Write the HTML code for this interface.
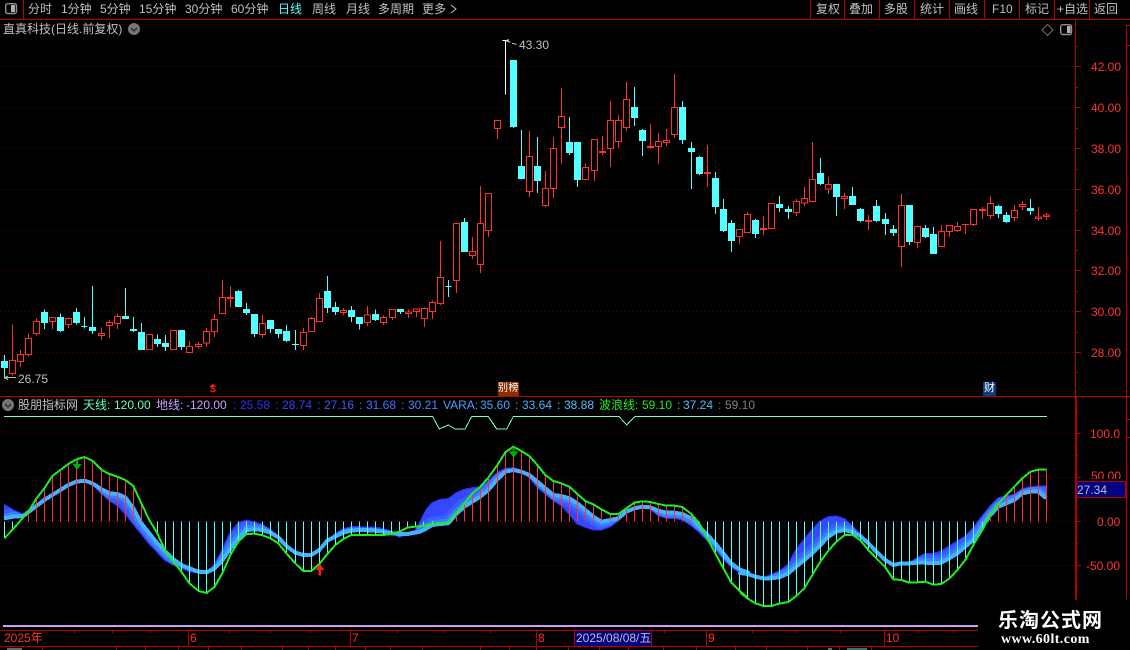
<!DOCTYPE html>
<html lang="zh"><head><meta charset="utf-8"><title>K线</title>
<style>
html,body{margin:0;padding:0;background:#000;width:1130px;height:650px;overflow:hidden}
#p{position:relative;width:1130px;height:650px;overflow:hidden;background:#000;font:12px/14px "Liberation Sans","WenQuanYi Zen Hei","Noto Sans CJK SC",sans-serif;color:#c0c0c0}
#p svg{position:absolute;left:0;top:0}
#p span{position:absolute;white-space:pre}
.r{color:#ff3232}
</style></head><body><div id="p">
<svg width="1130" height="650" viewBox="0 0 1130 650" shape-rendering="crispEdges" fill="none">
<defs>
<path id="b1" d="M12 345L40 362 70 375 100 355 133 325 157 313 181 300 205 285 229 275 253 272 277 280 300 305 328 330 352 345 376 370 400 400 424 430 448 460 472 485 496 510 520 523 544 533 568 543 596 547 620 547 644 525 668 480 691 430 715 400 739 392 763 398 787 405 811 420 835 440 859 465 886 488 910 495 934 495 958 480 982 452 1006 432 1030 418 1054 412 1078 412 1140 415V422L1078 420 1054 422 1030 428 1006 440 982 452 958 480 934 495 910 495 886 488 859 468 835 442 811 428 787 420 763 418 739 420 715 445 691 475 668 510 644 535 620 547 596 545 568 535 544 525 520 508 496 485 472 460 448 430 424 400 400 355 376 322 352 312 328 310 300 295 277 280 253 272 229 275 205 285 181 300 157 315 133 330 100 355 70 378 40 380 12 385z"/>
<path id="d1" d="M12 345L40 362 70 375 100 355 133 325 157 313 181 300 205 285 229 275 253 272 277 280 300 305 328 330 352 345 376 370 400 400 424 430 448 460 472 485 496 510 520 523 544 533 568 543 596 547 620 547 644 525 668 480 691 430 715 400 739 392 763 398 787 405 811 420 835 440 859 465 886 488 910 495 934 495 958 480 982 452 1006 432 1030 418 1054 412 1078 412 1140 415"/>
<path id="l1" d="M12 385L40 380 70 378 100 355 133 330 157 315 181 300 205 285 229 275 253 272 277 280 300 295 328 310 352 312 376 322 400 355 424 400 448 430 472 460 496 485 520 508 544 525 568 535 596 545 620 547 644 535 668 510 691 475 715 445 739 420 763 418 787 420 811 428 835 442 859 468 886 488 910 495 934 495 958 480 982 452 1006 440 1030 428 1054 422 1078 420 1140 422"/>
<clipPath id="c1"><path d="M12 345L40 362 70 375 100 355 133 325 157 313 181 300 205 285 229 275 253 272 277 280 300 305 328 330 352 345 376 370 400 400 424 430 448 460 472 485 496 510 520 523 544 533 568 543 596 547 620 547 644 525 668 480 691 430 715 400 739 392 763 398 787 405 811 420 835 440 859 465 886 488 910 495 934 495 958 480 982 452 1006 432 1030 418 1054 412 1078 412 1140 415V422L1078 420 1054 422 1030 428 1006 440 982 452 958 480 934 495 910 495 886 488 859 468 835 442 811 428 787 420 763 418 739 420 715 445 691 475 668 510 644 535 620 547 596 545 568 535 544 525 520 508 496 485 472 460 448 430 424 400 400 355 376 322 352 312 328 310 300 295 277 280 253 272 229 275 205 285 181 300 157 315 133 330 100 355 70 378 40 380 12 385z"/></clipPath>
<path id="b2" d="M0 412L40 418 64 425 88 440 112 430 136 422 150 400 170 360 187 340 211 330 235 328 259 310 283 300 307 295 331 292 355 275 382 250 406 237 430 235 454 243 478 260 502 290 526 310 550 330 574 345 598 370 622 400 646 410 670 418 694 418 721 408 745 390 769 365 793 352 817 348 841 355 865 375 889 383 913 383 937 388 964 405 988 425 1012 450 1036 475 1060 505 1084 530 1108 545 1140 552V550L1108 538 1084 520 1060 490 1036 460 1012 435 988 410 964 385 937 372 913 368 889 368 865 362 841 352 817 350 793 355 769 365 745 385 721 390 694 395 670 380 646 360 622 340 598 325 574 318 550 315 526 295 502 275 478 255 454 245 430 240 406 245 382 268 355 300 331 320 307 335 283 350 259 372 235 400 211 402 187 405 170 415 150 425 136 428 112 432 88 432 64 430 40 425 0 420z"/>
<path id="d2" d="M0 412L40 418 64 425 88 440 112 430 136 422 150 400 170 360 187 340 211 330 235 328 259 310 283 300 307 295 331 292 355 275 382 250 406 237 430 235 454 243 478 260 502 290 526 310 550 330 574 345 598 370 622 400 646 410 670 418 694 418 721 408 745 390 769 365 793 352 817 348 841 355 865 375 889 383 913 383 937 388 964 405 988 425 1012 450 1036 475 1060 505 1084 530 1108 545 1140 552"/>
<path id="l2" d="M0 420L40 425 64 430 88 432 112 432 136 428 150 425 170 415 187 405 211 402 235 400 259 372 283 350 307 335 331 320 355 300 382 268 406 245 430 240 454 245 478 255 502 275 526 295 550 315 574 318 598 325 622 340 646 360 670 380 694 395 721 390 745 385 769 365 793 355 817 350 841 352 865 362 889 368 913 368 937 372 964 385 988 410 1012 435 1036 460 1060 490 1084 520 1108 538 1140 550"/>
<clipPath id="c2"><path d="M0 412L40 418 64 425 88 440 112 430 136 422 150 400 170 360 187 340 211 330 235 328 259 310 283 300 307 295 331 292 355 275 382 250 406 237 430 235 454 243 478 260 502 290 526 310 550 330 574 345 598 370 622 400 646 410 670 418 694 418 721 408 745 390 769 365 793 352 817 348 841 355 865 375 889 383 913 383 937 388 964 405 988 425 1012 450 1036 475 1060 505 1084 530 1108 545 1140 552V550L1108 538 1084 520 1060 490 1036 460 1012 435 988 410 964 385 937 372 913 368 889 368 865 362 841 352 817 350 793 355 769 365 745 385 721 390 694 395 670 380 646 360 622 340 598 325 574 318 550 315 526 295 502 275 478 255 454 245 430 240 406 245 382 268 355 300 331 320 307 335 283 350 259 372 235 400 211 402 187 405 170 415 150 425 136 428 112 432 88 432 64 430 40 425 0 420z"/></clipPath>
<path id="b3" d="M-5 545L22 550 46 558 70 565 94 555 118 545 145 525 169 480 193 450 217 420 241 395 265 382 289 380 313 388 337 410 361 435 385 460 409 485 436 510 460 525 484 520 508 520 532 505 556 492 580 492 604 485 628 470 652 455 676 440 700 415 727 380 751 350 775 325 799 320 823 315 847 298 871 292 895 290 919 290V325L895 305 871 305 847 310 823 330 799 340 775 350 751 375 727 410 700 450 676 470 652 490 628 505 604 518 580 520 556 518 532 518 508 520 484 520 460 525 436 510 409 485 385 460 361 438 337 425 313 420 289 425 265 440 241 465 217 490 193 510 169 530 145 550 118 562 94 565 70 565 46 560 22 552 -5 548z"/>
<path id="d3" d="M-5 545L22 550 46 558 70 565 94 555 118 545 145 525 169 480 193 450 217 420 241 395 265 382 289 380 313 388 337 410 361 435 385 460 409 485 436 510 460 525 484 520 508 520 532 505 556 492 580 492 604 485 628 470 652 455 676 440 700 415 727 380 751 350 775 325 799 320 823 315 847 298 871 292 895 290 919 290"/>
<path id="l3" d="M-5 548L22 552 46 560 70 565 94 565 118 562 145 550 169 530 193 510 217 490 241 465 265 440 289 425 313 420 337 425 361 438 385 460 409 485 436 510 460 525 484 520 508 520 532 518 556 518 580 520 604 518 628 505 652 490 676 470 700 450 727 410 751 375 775 350 799 340 823 330 847 310 871 305 895 305 919 325"/>
<clipPath id="c3"><path d="M-5 545L22 550 46 558 70 565 94 555 118 545 145 525 169 480 193 450 217 420 241 395 265 382 289 380 313 388 337 410 361 435 385 460 409 485 436 510 460 525 484 520 508 520 532 505 556 492 580 492 604 485 628 470 652 455 676 440 700 415 727 380 751 350 775 325 799 320 823 315 847 298 871 292 895 290 919 290V325L895 305 871 305 847 310 823 330 799 340 775 350 751 375 727 410 700 450 676 470 652 490 628 505 604 518 580 520 556 518 532 518 508 520 484 520 460 525 436 510 409 485 385 460 361 438 337 425 313 420 289 425 265 440 241 465 217 490 193 510 169 530 145 550 118 562 94 565 70 565 46 560 22 552 -5 548z"/></clipPath>
</defs>
<!-- grid -->
<path d="M0 66.5H1075M0 107.5H1075M0 148.5H1075M0 189.5H1075M0 230.5H1075M0 270.5H1075M0 311.5H1075M0 352.5H1075M0 433.5H1075M0 477.5H1075M0 521.5H1075M0 565.5H1075" stroke="#6e0000" stroke-dasharray="1 3" shape-rendering="auto"/>
<!-- frame -->
<path d="M0 19.5H1130M0 396.5H1130M23.5 0V19M810.5 0V19M844.5 0V19M879.5 0V19M914.5 0V19M949.5 0V19M984.5 0V19M1019.5 0V19M1054.5 0V19M1089.5 0V19M1075.5 19V600M1126.5 25V600M1076.5 396V600M0 630.5H978M0 646.5H978M188.5 630V646M350.5 630V646M536.5 630V646M706.5 630V646M884.5 630V646M74.5 630V633M112.5 630V633M150.5 630V633M229.5 630V633M270.5 630V633M310.5 630V633M397.5 630V633M443.5 630V633M490.5 630V633M664.5 630V633M752.5 630V633M795.5 630V633M840.5 630V633M918.5 630V633M953.5 630V633M42.5 646V650M116.5 646V650M145.5 646V650M178.5 646V650M208.5 646V650M241.5 646V650M282.5 646V650M308.5 646V650M335.5 646V650M365.5 646V650M390.5 646V650M422.5 646V650M480.5 646V650M509.5 646V650M536.5 646V650M568.5 646V650M599.5 646V650M628.5 646V650M663.5 646V650M696.5 646V650M735.5 646V650M766.5 646V650M807.5 646V650M839.5 646V650M871.5 646V650M1075 66.5H1081M1075 107.5H1081M1075 148.5H1081M1075 189.5H1081M1075 230.5H1081M1075 270.5H1081M1075 311.5H1081M1075 352.5H1081M1075 433.5H1081M1075 477.5H1081M1075 521.5H1081M1075 565.5H1081M1075 46.5H1078M1075 87.5H1078M1075 128.5H1078M1075 169.5H1078M1075 210.5H1078M1075 250.5H1078M1075 291.5H1078M1075 332.5H1078M1075 372.5H1078M1075 411.5H1078M1075 455.5H1078M1075 499.5H1078M1075 543.5H1078M1075 586.5H1078M1126 45.5H1130M1126 25.5H1130M1126 419.5H1130M1126 437.5H1130" stroke="#b80000"/>
<path d="M3 626H978" stroke="#c8a0f0" stroke-width="2"/>
<path d="M7 649H22M828 649H832" stroke="#cccccc"/><path d="M847 649H867" stroke="#88dddd"/>
<!-- icons -->
<g shape-rendering="auto">
<rect x="5.7" y="3.7" width="10.8" height="9.8" rx="2" stroke="#909090" stroke-width="1.4"/><rect x="11" y="5" width="4" height="7" fill="#b0b0b0"/>
<rect x="1060.7" y="24.7" width="10.8" height="9.8" rx="2" stroke="#909090" stroke-width="1.4"/><rect x="1067" y="26" width="3.5" height="7" fill="#b0b0b0"/>
<path d="M1047.5 24.5l5.5 5.5-5.5 5.5-5.5-5.5z" stroke="#707070"/>
<circle cx="134" cy="29" r="6" fill="#777"/><path d="M131 28l3 3 3-3" stroke="#2a2a2a" stroke-width="1.3"/>
<circle cx="8" cy="405" r="6" fill="#777"/><path d="M5 404l3 3 3-3" stroke="#2a2a2a" stroke-width="1.3"/>
<path d="M451 5L456 9L451 13" stroke="#c0c0c0"/>
</g>
<!-- candles part 1 -->
<g transform="translate(0 270) scale(.33333)" stroke-width="3">
<path stroke="#ff3232" d="M37 163V317M61 240V291M85 190V260M109 145V197M157 142V177M205 145V174M305 172V210M328 150V204M352 130V177M568 213V248M596 216V236M620 174V231M644 132V201M668 30V131M691 48V111M787 135V204M910 174V240M934 141V186M958 69V156M1030 114V135"/>
<path stroke="#ff3232" fill="#000" d="M28 272h18V310h-18zM52 254h18V274h-18zM76 206h18V253h-18zM100 155h18V190h-18zM148 143h18V154h-18zM196 146h18V163h-18zM296 191h18V196h-18zM319 158h18V166h-18zM343 140h18V160h-18zM439 194h18V238h-18zM511 182h18V238h-18zM559 230h18V247h-18zM587 224h18V230h-18zM611 185h18V219h-18zM635 149h18V184h-18zM659 83h18V130h-18zM682 83h18V85h-18zM778 161h18V193h-18zM901 187h18V227h-18zM925 145h18V185h-18zM949 86h18V155h-18zM1021 121h18V128h-18z"/>
<path stroke="#54ffff" d="M13 255V325M133 118V177M181 130V186M229 114V164M253 141V176M277 48V192M376 54V147M400 141V186M424 159V240M472 193V231M496 195V243M544 180V240M715 60V111M739 99V135M763 132V201M811 150V189M835 177V204M859 165V216M886 180V240M982 18V129M1006 96V135M1054 108V156M1078 141V178"/>
<path stroke="#54ffff" fill="#54ffff" d="M4 274h18V292h-18zM124 127h18V158h-18zM172 142h18V182h-18zM220 127h18V158h-18zM244 170h18zM268 172h18V182h-18zM367 139h18V146h-18zM391 178h18V182h-18zM415 187h18V239h-18zM463 208h18V221h-18zM487 220h18V230h-18zM535 181h18V230h-18zM706 65h18V110h-18zM730 118h18V128h-18zM754 133h18V191h-18zM802 151h18V176h-18zM826 178h18V191h-18zM850 184h18V212h-18zM877 223h18V224h-18zM973 64h18V113h-18zM997 112h18V125h-18zM1045 121h18V140h-18zM1069 142h18V161h-18z"/>
<path stroke="#c0c0c0" d="M15 323H48M24 318L15 323L24 329"/>
<path stroke="#ff1818" fill="#ff1818" d="M639 344l6 6h-12z"/>
</g>
<!-- candles part 2 -->
<g transform="translate(360 30) scale(.33333)" stroke-width="3">
<path stroke="#ff3232" d="M22 828V888M70 857V885M97 838V870M145 838V864M169 836V861M193 832V891M217 811V867M241 633V825M289 580V789M337 621V687M361 468V729M385 490V621M412 271V327M508 303V501M556 423V531M580 321V504M604 174V402M676 400V450M703 328V453M727 318V375M751 213V411M775 255V354M799 156V303M871 282V356M895 309V402M919 297V348M943 132V324M1042 345V471"/>
<path stroke="#ff3232" fill="#000" d="M13 855h18V877h-18zM61 863h18V877h-18zM88 839h18V862h-18zM136 846h18V850h-18zM160 837h18V844h-18zM184 836h18V865h-18zM208 818h18V844h-18zM232 743h18V820h-18zM280 581h18V751h-18zM328 665h18V676h-18zM352 581h18V703h-18zM376 491h18V601h-18zM403 272h18V295h-18zM499 380h18V484h-18zM547 476h18V526h-18zM571 356h18V475h-18zM595 260h18V292h-18zM667 413h18V449h-18zM694 329h18V421h-18zM718 365h18V368h-18zM742 272h18V355h-18zM766 272h18V334h-18zM790 209h18V292h-18zM862 350h18V352h-18zM886 335h18V349h-18zM910 332h18V337h-18zM934 233h18V313h-18zM1033 428h18V430h-18z"/>
<path stroke="#54ffff" d="M46 838V873M121 838V852M265 750V801M313 564V666M460 90V294M484 300V447M532 321V489M628 261V375M652 336V471M823 171V288M847 297V378M967 213V342M994 336V477M1018 378V435M1066 426V552"/>
<path stroke="#54ffff" fill="#54ffff" d="M37 853h18V869h-18zM112 839h18V845h-18zM256 769h18zM304 577h18V665h-18zM451 91h18V290h-18zM475 409h18V446h-18zM523 409h18V452h-18zM619 337h18V368h-18zM643 337h18V449h-18zM814 232h18V263h-18zM838 301h18V332h-18zM958 232h18V329h-18zM985 355h18V365h-18zM1009 382h18V431h-18zM1057 445h18V530h-18z"/>
<path stroke="#fff" d="M436 33V194M427 31H445"/>
<path stroke="#c0c0c0" d="M440 33L452 37M456 40L470 43M445 28L439 33L447 36"/>
</g>
<!-- candles part 3 -->
<g transform="translate(700 120) scale(.33333)" stroke-width="3">
<path stroke="#ff3232" d="M118 328V372M142 276V338M190 288V345M289 237V288M313 201V258M337 66V245M385 171V222M433 219V267M505 285V330M604 222V441M652 317V384M724 315V380M748 316V351M772 306V336M796 312V342M820 268V318M847 261V297M871 228V297M943 255V303M967 243V270M1015 261V303M1039 279V300"/>
<path stroke="#ff3232" fill="#000" d="M109 329h18V349h-18zM133 284h18V337h-18zM181 326h18V328h-18zM205 251h18V325h-18zM280 245h18V277h-18zM304 236h18V249h-18zM328 179h18V244h-18zM376 194h18V207h-18zM424 230h18V235h-18zM496 301h18V304h-18zM595 257h18V379h-18zM643 320h18V367h-18zM715 335h18V379h-18zM739 317h18V334h-18zM763 320h18V331h-18zM787 313h18V314h-18zM811 269h18V313h-18zM838 268h18V271h-18zM862 251h18V286h-18zM934 272h18V292h-18zM958 254h18V259h-18zM1006 291h18V295h-18zM1030 285h18V289h-18z"/>
<path stroke="#54ffff" d="M70 237V336M94 300V396M166 297V354M238 228V276M265 258V297M361 114V195M409 192V288M457 201V255M481 264V306M529 240V306M556 279V345M580 315V348M628 255V375M676 315V354M700 321V402M895 255V294M919 276V309M991 237V285"/>
<path stroke="#54ffff" fill="#54ffff" d="M61 268h18V332h-18zM85 310h18V362h-18zM157 301h18V341h-18zM229 253h18V263h-18zM256 268h18V275h-18zM352 160h18V191h-18zM400 193h18V230h-18zM448 229h18V254h-18zM472 268h18V302h-18zM520 259h18V302h-18zM547 298h18V311h-18zM571 328h18V338h-18zM619 256h18V365h-18zM667 325h18V350h-18zM691 343h18V401h-18zM886 259h18V281h-18zM910 286h18V305h-18zM982 265h18V272h-18z"/>
</g>
<!-- sky line -->
<path stroke="#6fffd0" d="M4 416.5H432.7L439.3 429L448.3 425L455 429H465L471.7 416.5H488.3L496.7 429H506.7L513.3 416.5H619L626.7 425L635 416.5H1047"/>
<!-- indicator part 1 -->
<g transform="translate(0 390) scale(.33333)" stroke-linejoin="round">
<use href="#d1" stroke="#3030ff" stroke-width="7"/>
<use href="#b1" fill="#3448ff"/>
<g clip-path="url(#c1)"><use href="#l1" stroke="#3860ff" stroke-width="48"/><use href="#l1" stroke="#3c80ff" stroke-width="28"/></g>
<use href="#l1" stroke="#44b0ff" stroke-width="12"/>
<path stroke="#54ffff" stroke-width="3" d="M13 394V445M37 394V420M472 394V430M496 394V483M520 394V515M544 394V545M568 394V580M596 394V603M620 394V609M644 394V590M668 394V548M691 394V495M715 394V455M739 394V432M763 394V431M787 394V436M811 394V445M835 394V460M859 394V490M886 394V520M910 394V543M934 394V543M958 394V522M982 394V492M1006 394V465M1030 394V447M1054 394V435M1078 394V435M1102 394V435M1126 394V435"/>
<path stroke="#ff3232" stroke-width="3" d="M85 394V365M109 394V326M133 394V295M157 394V258M181 394V240M205 394V222M229 394V208M253 394V201M277 394V212M305 394V240M328 394V252M352 394V260M376 394V270M400 394V288M424 394V340"/>
<path stroke="#1cf01c" stroke-width="6" d="M13 445L37 420 61 392 85 365 109 326 133 295 157 258 181 240 205 222 229 208 253 201 277 212 305 240 328 252 352 260 376 270 400 288 424 340 448 390 472 430 496 483 520 515 544 545 568 580 596 603 620 609 644 590 668 548 691 495 715 455 739 432 763 431 787 436 811 445 835 460 859 490 886 520 910 543 934 543 958 522 982 492 1006 465 1030 447 1054 435 1078 435 1140 435"/>
<path fill="#00b000" d="M228 208h6v14h11l-14 18-13-18h10z"/>
<path fill="#ff1c1c" d="M960 522l13 18h-10v17h-7v-17h-10z"/>
</g>
<!-- indicator part 2 -->
<g transform="translate(370 390) scale(.33333)" stroke-linejoin="round">
<use href="#d2" stroke="#3030ff" stroke-width="7"/>
<use href="#b2" fill="#3448ff"/>
<g clip-path="url(#c2)"><use href="#l2" stroke="#3860ff" stroke-width="48"/><use href="#l2" stroke="#3c80ff" stroke-width="28"/></g>
<use href="#l2" stroke="#44b0ff" stroke-width="12"/>
<path stroke="#54ffff" stroke-width="3" d="M16 394V435M40 394V435M64 394V432M88 394V425M112 394V413M136 394V410M160 394V408M187 394V402M988 394V400M1012 394V445M1036 394V490M1060 394V535M1084 394V578M1108 394V602M1132 394V622"/>
<path stroke="#ff3232" stroke-width="3" d="M259 394V370M283 394V340M307 394V310M331 394V290M355 394V263M382 394V225M406 394V187M430 394V170M454 394V183M478 394V198M502 394V225M526 394V255M550 394V273M574 394V280M598 394V290M622 394V312M646 394V333M670 394V343M694 394V358M721 394V372M745 394V372M769 394V355M793 394V338M817 394V334M841 394V336M865 394V342M889 394V347M913 394V347M937 394V351M964 394V372"/>
<path stroke="#1cf01c" stroke-width="6" d="M0 435L16 435 40 435 64 432 88 425 112 413 136 410 160 408 187 402 211 400 235 397 259 370 283 340 307 310 331 290 355 263 382 225 406 187 430 170 454 183 478 198 502 225 526 255 550 273 574 280 598 290 622 312 646 333 670 343 694 358 721 372 745 372 769 355 793 338 817 334 841 336 865 342 889 347 913 347 937 351 964 372 988 400 1012 445 1036 490 1060 535 1084 578 1108 602 1132 622"/>
<path fill="#00a800" d="M427 172h7v13h11l-14 18-14-18h10z"/>
</g>
<!-- indicator part 3 -->
<g transform="translate(740 390) scale(.33333)" stroke-linejoin="round">
<use href="#d3" stroke="#3030ff" stroke-width="7"/>
<use href="#b3" fill="#3448ff"/>
<g clip-path="url(#c3)"><use href="#l3" stroke="#3860ff" stroke-width="48"/><use href="#l3" stroke="#3c80ff" stroke-width="28"/></g>
<use href="#l3" stroke="#44b0ff" stroke-width="12"/>
<path stroke="#54ffff" stroke-width="3" d="M22 394V625M46 394V640M70 394V648M94 394V648M118 394V641M145 394V636M169 394V618M193 394V595M217 394V555M241 394V515M265 394V482M289 394V455M313 394V436M337 394V434M361 394V451M385 394V480M409 394V505M436 394V532M460 394V568M484 394V570M508 394V578M532 394V577M556 394V575M580 394V584M604 394V582M628 394V566M652 394V540M676 394V510M700 394V465M727 394V420"/>
<path stroke="#ff3232" stroke-width="3" d="M751 394V372M775 394V340M799 394V315M823 394V290M847 394V265M871 394V245M895 394V239M919 394V239"/>
<path stroke="#1cf01c" stroke-width="6" d="M0 608L22 625 46 640 70 648 94 648 118 641 145 636 169 618 193 595 217 555 241 515 265 482 289 455 313 436 337 434 361 451 385 480 409 505 436 532 460 568 484 570 508 578 532 577 556 575 580 584 604 582 628 566 652 540 676 510 700 465 727 420 751 372 775 340 799 315 823 290 847 265 871 245 895 239 919 239"/>
</g>
<!-- boxes -->
<rect x="1076.5" y="481.5" width="49" height="16" fill="#000080" stroke="#b80000"/>
<rect x="574.5" y="630.5" width="77" height="16" fill="#000080" stroke="#b80000"/>
<rect x="498" y="382" width="21" height="14" fill="#8a3000"/>
<rect x="983" y="382" width="13" height="14" fill="#0a3a80"/>
</svg>
<!-- toolbar -->
<span style="left:28px;top:2px">分时</span>
<span style="left:61px;top:2px">1分钟</span>
<span style="left:100px;top:2px">5分钟</span>
<span style="left:139px;top:2px">15分钟</span>
<span style="left:185px;top:2px">30分钟</span>
<span style="left:231px;top:2px">60分钟</span>
<span style="left:278px;top:2px;color:#54ffff">日线</span>
<span style="left:312px;top:2px">周线</span>
<span style="left:346px;top:2px">月线</span>
<span style="left:378px;top:2px">多周期</span>
<span style="left:422px;top:2px">更多</span>
<span style="left:816px;top:2px">复权</span>
<span style="left:849px;top:2px">叠加</span>
<span style="left:884px;top:2px">多股</span>
<span style="left:920px;top:2px">统计</span>
<span style="left:954px;top:2px">画线</span>
<span style="left:992px;top:2px">F10</span>
<span style="left:1025px;top:2px">标记</span>
<span style="left:1057px;top:2px">+自选</span>
<span style="left:1094px;top:2px">返回</span>
<span style="left:3px;top:22px">直真科技(日线.前复权)</span>
<!-- markers -->
<span style="left:519px;top:38px">43.30</span>
<span style="left:18px;top:372px">26.75</span>
<!-- y axis -->
<span class="r" style="left:1091px;top:60px">42.00</span>
<span class="r" style="left:1091px;top:101px">40.00</span>
<span class="r" style="left:1091px;top:142px">38.00</span>
<span class="r" style="left:1091px;top:183px">36.00</span>
<span class="r" style="left:1091px;top:224px">34.00</span>
<span class="r" style="left:1091px;top:264px">32.00</span>
<span class="r" style="left:1091px;top:305px">30.00</span>
<span class="r" style="left:1091px;top:346px">28.00</span>
<span class="r" style="left:1090px;top:427px">100.0</span>
<span class="r" style="left:1091px;top:469px;clip-path:inset(0 0 4px 0)">50.00</span>
<span class="r" style="left:1097px;top:515px">0.00</span>
<span class="r" style="left:1086px;top:559px">-50.00</span>
<span style="left:1077px;top:483px">27.34</span>
<!-- indicator header -->
<span style="left:18px;top:398px">股朋指标网</span>
<span style="left:83px;top:398px;color:#66ffbb">天线:</span>
<span style="left:114px;top:398px;color:#66ffbb">120.00</span>
<span style="left:156px;top:398px;color:#c8a0ff">地线:</span>
<span style="left:186px;top:398px;color:#c8a0ff">-120.00</span>
<span style="left:233px;top:398px;color:#3030ff">:</span><span style="left:240px;top:398px;color:#3030ff">25.58</span>
<span style="left:275px;top:398px;color:#3a40ff">:</span><span style="left:282px;top:398px;color:#3a40ff">28.74</span>
<span style="left:317px;top:398px;color:#3e58ff">:</span><span style="left:324px;top:398px;color:#3e58ff">27.16</span>
<span style="left:359px;top:398px;color:#4070ff">:</span><span style="left:366px;top:398px;color:#4070ff">31.68</span>
<span style="left:401px;top:398px;color:#4488ff">:</span><span style="left:408px;top:398px;color:#4488ff">30.21</span>
<span style="left:443px;top:398px;color:#4aa0ff">VARA:</span><span style="left:480px;top:398px;color:#4aa0ff">35.60</span>
<span style="left:515px;top:398px;color:#4cb0ff">:</span><span style="left:522px;top:398px;color:#4cb0ff">33.64</span>
<span style="left:557px;top:398px;color:#50c0ff">:</span><span style="left:564px;top:398px;color:#50c0ff">38.88</span>
<span style="left:599px;top:398px;color:#1cf01c">波浪线:</span><span style="left:642px;top:398px;color:#1cf01c">59.10</span>
<span style="left:677px;top:398px;color:#4cc0ff">:</span><span style="left:683px;top:398px;color:#4cc0ff">37.24</span>
<span style="left:718px;top:398px;color:#808080">:</span><span style="left:725px;top:398px;color:#808080">59.10</span>
<!-- signals -->
<span style="left:210px;top:384px;color:#ff1c1c;font-size:10px;line-height:12px;font-weight:bold">$</span>
<span style="left:498px;top:382px;color:#fff;font-size:10px;line-height:13px;letter-spacing:.5px">别榜</span>
<span style="left:984px;top:382px;color:#fff;font-size:11px;line-height:13px">财</span>
<!-- x axis -->
<span class="r" style="left:4px;top:631px">2025年</span>
<span class="r" style="left:190px;top:631px">6</span>
<span class="r" style="left:352px;top:631px">7</span>
<span class="r" style="left:538px;top:631px">8</span>
<span class="r" style="left:708px;top:631px">9</span>
<span class="r" style="left:886px;top:631px">10</span>
<span style="left:576px;top:631px">2025/08/08/五</span>
<!-- watermark -->
<span style="left:998px;top:606px;color:#fff;font:bold 20px/26px 'Noto Sans CJK SC','WenQuanYi Zen Hei',sans-serif;letter-spacing:1px">乐淘公式网</span>
<span style="left:1001px;top:632px;color:#fff;font:bold 14px/15px 'Liberation Serif',serif;letter-spacing:.4px">www.60lt.com</span>
</div></body></html>
